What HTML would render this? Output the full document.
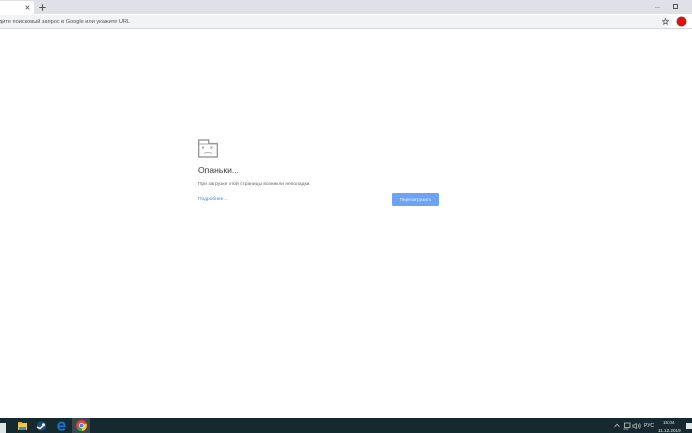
<!DOCTYPE html>
<html><head><meta charset="utf-8"><style>
html,body{margin:0;padding:0;background:#fff}
body{width:692px;height:433px;position:relative;overflow:hidden;font-family:"Liberation Sans","Noto Sans CJK SC",sans-serif}
div,svg{position:absolute}
.t{white-space:nowrap;line-height:1}
</style></head><body>
<div style="left:0;top:0;width:692px;height:14px;background:#dee1e6"></div>
<div style="left:0;top:1px;width:34px;height:13px;background:#fff;border-top-right-radius:3px"></div>
<svg style="left:25px;top:5px" width="5" height="5" viewBox="0 0 5 5"><path d="M.7.7l3.6 3.6M4.3.7L.7 4.3" stroke="#666" stroke-width=".9" fill="none"/></svg>
<svg style="left:39px;top:4px" width="7" height="7" viewBox="0 0 7 7"><path d="M3.500.3v6.400M.3 3.500h6.400" stroke="#555" stroke-width="1.100" fill="none"/></svg>
<div style="left:0;top:14px;width:692px;height:14px;background:#fff"></div>
<div style="left:0;top:15px;width:672px;height:13px;background:#f1f3f4;border-radius:0 7px 7px 0"></div>
<div style="left:0;top:28px;width:692px;height:1px;background:#d5d6d8"></div>
<div class="t" style="left:-1px;top:20px;font-size:5.600px;color:#555;filter:blur(.3px)">дите поисковый запрос в Google или укажите URL</div>
<div style="left:655px;top:7px;width:5px;height:1px;background:#b0b4b8"></div>
<div style="left:673px;top:4px;width:5px;height:5px;border:1px solid #555;box-sizing:border-box"></div>
<svg style="left:662px;top:18px" width="7" height="7" viewBox="0 0 9 9"><path d="M4.500.8l1.100 2.500 2.600.2-2 1.700.6 2.600-2.300-1.400-2.300 1.400.6-2.600-2-1.700 2.600-.2z" fill="none" stroke="#666" stroke-width="1.100"/></svg>
<div style="left:677px;top:17px;width:9px;height:9px;border-radius:50%;background:#e0110c;box-shadow:0 0 0 .5px #6b4a1c"></div>

<svg style="left:198px;top:139px" width="20" height="19" viewBox="0 0 20 19"><path d="M.7 18V1h10v3.500h8.600V18z" fill="#fff" stroke="#8a8a8a" stroke-width="1.200"/><path d="M.7 5h18.600" stroke="#aaa" stroke-width=".9"/><path d="M4 7.500l2 2M6 7.500l-2 2M12.500 7.500l2 2M14.500 7.500l-2 2M6 14.500q4-2.500 8 0" fill="none" stroke="#999" stroke-width=".8"/></svg>
<div class="t" style="left:198px;top:166px;font-size:8.600px;color:#3c3c3c;filter:blur(.25px)">Опаньки...</div>
<div class="t" style="left:198px;top:183px;font-size:4.900px;color:#666;filter:blur(.25px)">При загрузке этой страницы возникли неполадки.</div>
<div class="t" style="left:198px;top:197.500px;font-size:4.900px;color:#4a80e0;filter:blur(.25px)">Подробнее...</div>
<div style="left:392px;top:193px;width:47px;height:13px;background:#6da3f5;border-radius:1.500px"></div>
<div class="t" style="left:392px;top:198px;width:47px;text-align:center;font-size:4.700px;color:#eaf2ff;filter:blur(.2px)">Перезагрузить</div>

<div style="left:0;top:418px;width:692px;height:15px;background:#16292f"></div>
<div style="left:72px;top:418px;width:18px;height:15px;background:#3a484c"></div>
<div style="left:0;top:423px;width:6px;height:10px;background:#dfe6e6"></div>
<div style="left:18px;top:423px;width:9px;height:7px;background:#f2c84b"></div>
<div style="left:18px;top:422px;width:4px;height:2px;background:#e8b43a"></div>
<div style="left:19px;top:427px;width:7px;height:3px;background:#3f8fd0"></div>
<svg style="left:36px;top:421px" width="11" height="10" viewBox="0 0 11 10"><circle cx="5.500" cy="5" r="4.800" fill="#1c4a72"/><path d="M1 6l3 1.500L8 4" stroke="#e6eef2" stroke-width="1.600" fill="none"/><circle cx="7.500" cy="3.800" r="1.600" fill="#e6eef2"/></svg>
<svg style="left:57px;top:421px" width="9" height="10" viewBox="0 0 9 10"><path d="M1.300 5.300h6.400C7.600 2.800 6.300 1.500 4.500 1.500 2.500 1.500 1.200 3.200 1.200 5.200c0 2.200 1.500 3.600 3.500 3.600 1.200 0 2.200-.3 3-.9" fill="none" stroke="#1273d6" stroke-width="1.900"/></svg>
<svg style="left:76px;top:420px" width="11" height="11" viewBox="0 0 18 18"><circle cx="9" cy="9" r="9" fill="#dc4437"/><path d="M9 9L1 13.500A9 9 0 0 0 10 18z" fill="#2fa350"/><path d="M9 9l8-3.500A9 9 0 0 1 10 18z" fill="#f7c53a"/><circle cx="9" cy="9" r="4.400" fill="#fff"/><circle cx="9" cy="9" r="3.300" fill="#4285f4"/></svg>
<svg style="left:614px;top:423px" width="6" height="5" viewBox="0 0 6 5"><path d="M.5 4L3 1.200 5.500 4" fill="none" stroke="#bcc4c6" stroke-width=".8"/></svg>
<svg style="left:623px;top:422px" width="8" height="8" viewBox="0 0 8 8"><path d="M1.500 1h5.500v4.500H1.500zM.5 7h5" fill="none" stroke="#c5cccd" stroke-width=".8"/></svg>
<svg style="left:632px;top:422px" width="9" height="8" viewBox="0 0 9 8"><path d="M.8 3v2h1.500l2 1.500v-5l-2 1.500zM6 2.300q1 1.700 0 3.400M7.500 1.300q1.400 2.700 0 5.400" fill="none" stroke="#c5cccd" stroke-width=".7"/></svg>
<div class="t" style="left:644px;top:424px;font-size:5px;color:#dfe5e6;filter:blur(.2px)">РУС</div>
<div class="t" style="left:663px;top:420.500px;font-size:4.600px;color:#e4e9ea;filter:blur(.2px)">15:04</div>
<div class="t" style="left:658px;top:428.500px;font-size:4.600px;color:#e4e9ea;filter:blur(.2px)">11.12.2019</div>
<div style="left:686px;top:423px;width:6px;height:6px;background:#dfe6e6"></div>
</body></html>
